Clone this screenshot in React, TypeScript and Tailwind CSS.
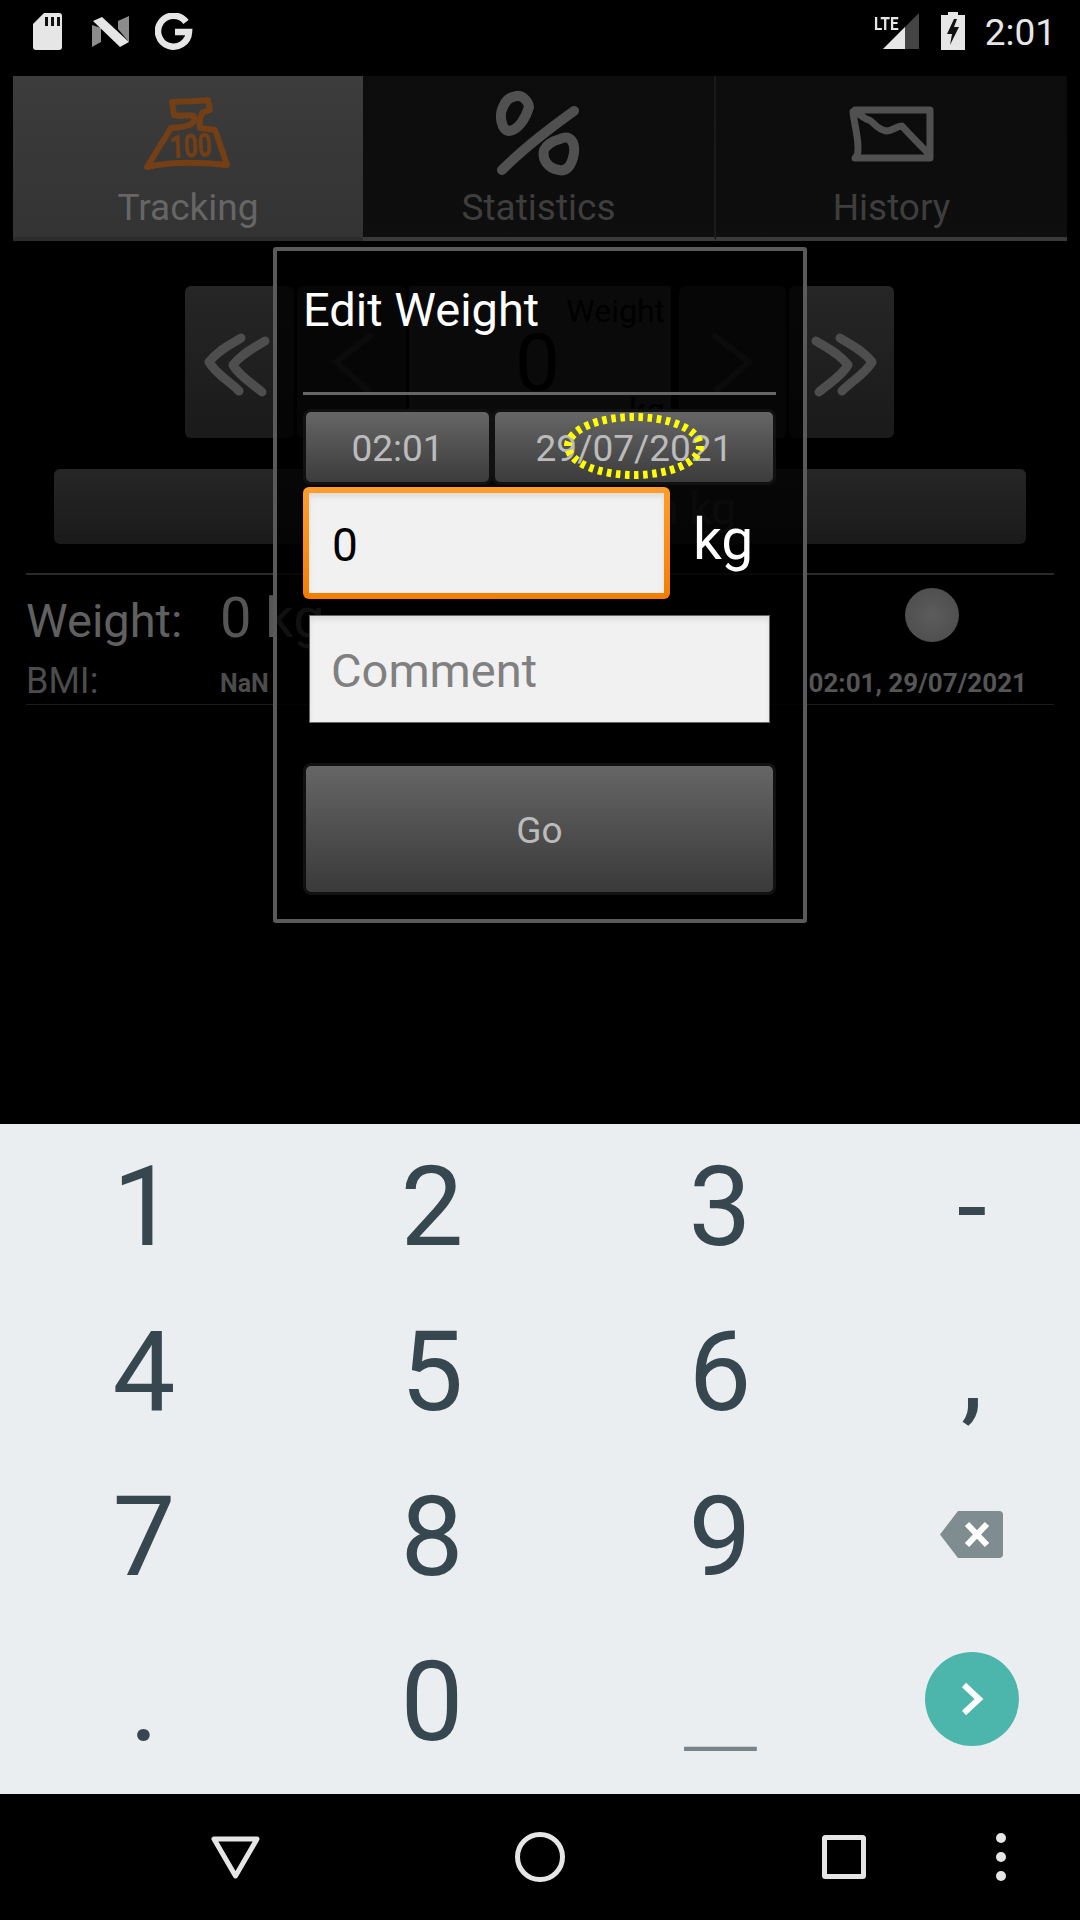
import React from "react";

const Chevrons = ({ flip }: { flip?: boolean }) => (
  <svg width="107" height="152" viewBox="0 -3 107 152" fill="none" stroke="#4e4e4e" strokeWidth="9" strokeLinecap="round" strokeLinejoin="round" className={"blur-[0.5px] " + (flip ? "-scale-x-100" : "")}>
    <path d="M56 49C45 56 32 62 24 73C30 84 44 92 54 102" />
    <path d="M80 52C69 59 56 65 48 76C54 87 68 95 77 103" />
  </svg>
);

const Key = ({ children, cls = "" }: { children?: React.ReactNode; cls?: string }) => (
  <div className={"flex items-center justify-center text-[112px] leading-none text-[#37474f] " + cls}>{children}</div>
);

export default function App() {
  return (
    <div className="relative flex h-[1920px] w-[1080px] flex-col overflow-hidden bg-black font-['Roboto',sans-serif]">
      {/* status bar */}
      <div className="flex h-[76px] shrink-0 items-start pl-[33px] pr-[24px] pt-[13px] text-[#e6e6e6]">
        <svg width="29" height="37" viewBox="0 0 29 37">
          <path d="M11 0H26Q29 0 29 3V34Q29 37 26 37H3Q0 37 0 34V11Z" fill="#e6e6e6" />
          <path d="M12 4h3v9h-3zM18 4h3v9h-3zM24 4h3v9h-3z" fill="#111" />
        </svg>
        <svg className="ml-[30px]" width="37" height="37" viewBox="0 0 37 37">
          <path d="M0 12L0 34L9 29V15Z" fill="#8c8c8c" />
          <path d="M26 8L37 3V29L26 16Z" fill="#8c8c8c" />
          <path d="M1 8L10 4L37 29L28 34Z" fill="#e6e6e6" />
        </svg>
        <svg className="ml-[26px]" width="38" height="38" viewBox="0 0 38 38" fill="none">
          <path d="M31 9A15.5 15.5 0 1 0 34 19H20" stroke="#e6e6e6" strokeWidth="6.5" />
        </svg>
        <div className="ml-auto flex items-start">
          <div className="relative h-[37px] w-[45px]">
            <svg width="45" height="37" viewBox="0 0 45 37">
              <path d="M9 36L45 0V36Z" fill="#444" />
              <path d="M9 36L31 14V36Z" fill="#e6e6e6" />
            </svg>
            <span className="absolute left-0 top-[1px] origin-left scale-x-[.8] text-[19px] font-bold leading-[19px] text-[#e6e6e6]">LTE</span>
          </div>
          <svg className="ml-[22px] -mt-[1px]" width="24" height="38" viewBox="0 0 24 38">
            <path d="M7 0H17V3H24V38H0V3H7Z" fill="#e6e6e6" />
            <path d="M13 7L6 22H11L9 33L18 15H13L16 7Z" fill="#111" />
          </svg>
          <span className="ml-[20px] -mt-[1px] text-[37px] leading-[42px]">2:01</span>
        </div>
      </div>

      {/* tabs */}
      <div className="mx-[13px] flex h-[165px] shrink-0">
        <div className="flex w-[350px] flex-col items-center border-b-[4px] border-[#2c2c2c] bg-gradient-to-b from-[#3c3c3c] to-[#333] pt-[9px]">
          <svg className="ml-[2px] blur-[0.5px]" width="120" height="100" viewBox="0 0 120 100" fill="none" stroke="#743f14" strokeWidth="6" strokeLinecap="round" strokeLinejoin="round">
            <path d="M79 15C62 17 52 16 43 17L45 30C52 32 60 29 65 31C67 40 58 42 42 43L18 82C45 76 72 77 98 80C94 68 90 56 86 45L71 43C70 36 71 32 73 28L81 25L79 15" />
            <text x="41" y="72" fontSize="32" fontFamily="Roboto" fontWeight="700" fill="#743f14" stroke="#743f14" strokeWidth="0.6" transform="rotate(-3 60 60)" textLength="42" lengthAdjust="spacingAndGlyphs">100</text>
          </svg>
          <span className="mt-[2px] text-[37px] leading-[42px] text-[#666]">Tracking</span>
        </div>
        <div className="flex w-[353px] flex-col items-center border-b-[4px] border-r-[2px] border-b-[#3a3a3a] border-r-[#1a1a1a] bg-gradient-to-b from-[#0c0c0c] to-[#0e0e0e] pt-[9px]">
          <svg className="blur-[0.5px]" width="120" height="100" viewBox="0 0 120 100" fill="none" stroke="#505050" strokeWidth="10" strokeLinecap="round" strokeLinejoin="round">
            <path d="M34 12C43 8 49 16 50 22C47 32 40 45 30 46C22 45 20 30 24 22C26 17 29 13 34 12Z" />
            <path d="M95 26C74 41 45 63 23 85" />
            <path d="M81 54C92 49 96 58 95 68C93 80 88 87 80 85C68 83 63 74 65 65C68 59 74 56 81 54Z" />
          </svg>
          <span className="mt-[2px] text-[37px] leading-[42px] text-[#3e3e3e]">Statistics</span>
        </div>
        <div className="flex w-[351px] flex-col items-center border-b-[4px] border-b-[#3a3a3a] bg-gradient-to-b from-[#0c0c0c] to-[#0e0e0e] pt-[9px]">
          <svg className="mr-[2px] blur-[0.5px]" width="120" height="100" viewBox="0 0 120 100" fill="none" stroke="#505050" strokeWidth="7" strokeLinecap="round" strokeLinejoin="round">
            <path d="M24 25H99V73H24C27 70 27 68 27 63C27 50 23 38 22 27C30 28 32 34 38 35C43 37 45 44 55 46C62 46 65 41 71 41C78 49 88 59 97 68" />
          </svg>
          <span className="mt-[2px] text-[37px] leading-[42px] text-[#3e3e3e]">History</span>
        </div>
      </div>

      {/* tracking page, dimmed */}
      <div className="flex flex-1 flex-col">
        <div className="ml-[185px] mt-[45px] flex h-[152px] w-[709px]">
          <div className="w-[109px] rounded-md bg-gradient-to-b from-[#262626] to-[#1a1a1a]"><Chevrons /></div>
          <div className="ml-[3px] flex w-[109px] items-center justify-center rounded-md bg-[#1e1e1e]">
            <svg width="48" height="64" viewBox="0 0 48 64" fill="none" stroke="#3a3a3a" strokeWidth="6" strokeLinecap="round"><path d="M42 6L8 32L40 60" /></svg>
          </div>
          <div className="ml-[3px] flex h-[130px] w-[262px] flex-col bg-[#323232] pr-[6px] pt-[6px] text-black">
            <span className="self-end text-[32px] leading-[38px]">Weight</span>
            <span className="mt-[3px] self-center pl-[1px] text-[80px] leading-[60px]">0</span>
            <span className="mt-[2px] self-end text-[34px] leading-[30px]">kg</span>
          </div>
          <div className="ml-[8px] flex w-[107px] items-center justify-center rounded-md bg-[#1e1e1e]">
            <svg width="48" height="64" viewBox="0 0 48 64" fill="none" stroke="#3a3a3a" strokeWidth="6" strokeLinecap="round"><path d="M6 6L40 32L8 60" /></svg>
          </div>
          <div className="ml-[3px] w-[105px] rounded-md bg-gradient-to-b from-[#262626] to-[#1a1a1a]"><Chevrons flip /></div>
        </div>
        <div className="mx-[54px] mt-[31px] flex h-[75px] items-center justify-end rounded-md bg-gradient-to-b from-[#262626] to-[#1a1a1a] pr-[290px] pt-[4px] text-[44px] text-[#383838]">n kg</div>
        <div className="mx-[26px] mt-[29px] h-[2px] bg-[#2a2a2a]" />
        <div className="mx-[26px] flex h-[92px] items-center">
          <span className="w-[194px] text-[47px] text-[#606060]">Weight:</span>
          <span className="-mt-[7px] text-[56px] text-[#555]">0 kg</span>
          <div className="-mt-[12px] ml-auto mr-[95px] h-[54px] w-[54px] rounded-full bg-[radial-gradient(circle,#5c5c5c,#4a4a4a)] blur-[0.5px]" />
        </div>
        <div className="mx-[26px] flex h-[38px] items-center border-b border-[#1c1c1c] pb-[5px]">
          <span className="-mt-[5px] w-[194px] text-[36px] leading-none text-[#4c4c4c]">BMI:</span>
          <span className="text-[25px] font-bold leading-none text-[#4c4c4c]">NaN</span>
          <span className="ml-auto mr-[27px] text-[26px] font-bold leading-none text-[#555]">02:01, 29/07/2021</span>
        </div>
      </div>

      {/* keyboard */}
      <div className="grid h-[670px] shrink-0 grid-cols-[288px_288px_288px_216px] grid-rows-[repeat(4,165px)] bg-[#ebeef1] pb-[10px]">
        <Key>1</Key><Key>2</Key><Key>3</Key>
        <Key cls="!text-[108px]">-</Key>
        <Key>4</Key><Key>5</Key><Key>6</Key>
        <Key>,</Key>
        <Key>7</Key><Key>8</Key><Key>9</Key>
        <Key>
          <svg className="mb-[5px] mr-[2px]" width="63" height="47" viewBox="0 0 63 47">
            <path d="M18 0H59Q63 0 63 4V43Q63 47 59 47H18L0 23.5Z" fill="#7f8c90" />
            <path d="M27 13L47 34M47 13L27 34" stroke="#fff" strokeWidth="6" fill="none" />
          </svg>
        </Key>
        <Key>.</Key>
        <Key>0</Key>
        <Key cls="!text-[#78848a] pt-[52px]"><span className="inline-block scale-x-[1.45] scale-y-[.5]">_</span></Key>
        <Key>
          <div className="mb-[5px] flex h-[94px] w-[94px] items-center justify-center rounded-full bg-[#4db6ac]">
            <svg width="24" height="34" viewBox="0 0 24 34" fill="none" stroke="#fff" strokeWidth="6"><path d="M4 3L19 17L4 31" /></svg>
          </div>
        </Key>
      </div>

      {/* nav */}
      <div className="flex h-[126px] shrink-0 items-start bg-black pl-[211px] pt-[38px]">
        <svg className="mt-[4px]" width="49" height="43" viewBox="0 0 49 43" fill="none" stroke="#e6e6e6" strokeWidth="5" strokeLinejoin="round"><path d="M3 3H46L24.5 40Z" /></svg>
        <svg className="ml-[255px]" width="50" height="50" viewBox="0 0 50 50" fill="none" stroke="#e6e6e6" strokeWidth="5"><circle cx="25" cy="25" r="22.5" /></svg>
        <svg className="ml-[257px] mt-[3px]" width="44" height="44" viewBox="0 0 44 44" fill="none" stroke="#e6e6e6" strokeWidth="5" strokeLinejoin="round"><rect x="2.5" y="2.5" width="39" height="39" rx="1" /></svg>
        <svg className="ml-[130px] mt-[1px]" width="10" height="48" viewBox="0 0 10 48" fill="#e6e6e6"><circle cx="5" cy="5" r="5" /><circle cx="5" cy="24" r="5" /><circle cx="5" cy="43" r="5" /></svg>
      </div>

      {/* dialog */}
      <div className="absolute left-[273px] top-[247px] flex h-[676px] w-[534px] flex-col rounded-[3px] border-[4px] border-[#5a5a5a] bg-black/80 pl-[26px] pr-[27px]">
        <div className="h-[144px] border-b-[3px] border-[#666] pt-[33px] text-[47px] leading-[52px] text-white">Edit Weight</div>
        <div className="mt-[14px] flex h-[76px] text-[37px] text-[#bbb]">
          <div className="flex w-[189px] items-center justify-center rounded-lg border-[3px] border-[#111] bg-gradient-to-b from-[#666] to-[#3c3c3c] pt-[4px]">02:01</div>
          <div className="flex w-[284px] items-center justify-center rounded-lg border-[3px] border-[#111] bg-gradient-to-b from-[#666] to-[#3c3c3c] pt-[4px]">29/07/2021</div>
        </div>
        <div className="mt-[2px] flex h-[112px] items-center">
          <div className="h-full w-[367px] rounded-md bg-gradient-to-b from-[#ff9d2b] to-[#f47d00] p-[6px]">
            <div className="flex h-full items-center bg-[#f1f1f1] pl-[23px] pt-[4px] text-[46px] text-black shadow-[inset_0_4px_5px_#ddd]">0</div>
          </div>
          <span className="ml-[23px] pb-[8px] text-[57px] leading-none text-white">kg</span>
        </div>
        <div className="ml-[6px] mt-[16px] flex h-[108px] w-[461px] items-center border border-[#666] bg-[#f1f1f1] pl-[21px] pt-[4px] text-[47px] text-[#808080] shadow-[inset_0_4px_5px_#ddd]">Comment</div>
        <div className="mt-[40px] flex h-[132px] items-center justify-center rounded-lg border-[3px] border-[#111] bg-gradient-to-b from-[#666] to-[#3a3a3a] pt-[4px] text-[37px] text-[#bbb]">Go</div>
      </div>

      {/* touch marker */}
      <svg className="absolute left-[564px] top-[413px]" width="140" height="66" viewBox="0 0 140 66" fill="none">
        <ellipse cx="70" cy="33" rx="66" ry="29" stroke="#ffff00" strokeWidth="8" strokeDasharray="4.5 4.6" />
      </svg>
    </div>
  );
}
